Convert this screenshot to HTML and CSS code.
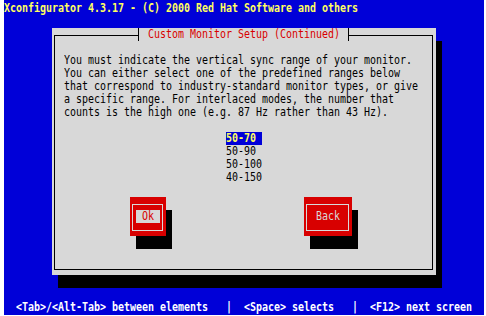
FILE: index.html
```html
<!DOCTYPE html>
<html>
<head>
<meta charset="utf-8">
<link rel="stylesheet" href="styles.css">
</head>
<body>
<div class="screen">
  <div class="titlebar"><span class="tx">Xconfigurator 4.3.17 - (C) 2000 Red Hat Software and others</span></div>
  <div class="dialog">
    <div class="dtitle"><span class="tx">Custom Monitor Setup (Continued)</span></div>
    <div class="frame">
      <div class="body">
        <div class="line"><span class="tx">You must indicate the vertical sync range of your monitor.</span></div>
        <div class="line"><span class="tx">You can either select one of the predefined ranges below</span></div>
        <div class="line"><span class="tx">that correspond to industry-standard monitor types, or give</span></div>
        <div class="line"><span class="tx">a specific range. For interlaced modes, the number that</span></div>
        <div class="line"><span class="tx">counts is the high one (e.g. 87 Hz rather than 43 Hz).</span></div>
      </div>
      <div class="list">
        <div class="item sel"><span class="tx">50-70</span></div>
        <div class="item"><span class="tx">50-90</span></div>
        <div class="item"><span class="tx">50-100</span></div>
        <div class="item"><span class="tx">40-150</span></div>
      </div>
      <div class="buttons">
        <div class="btn ok"><div class="bframe"><div class="blabel"><span class="tx">Ok</span></div></div></div>
        <div class="btn back"><div class="bframe"><div class="blabel"><span class="tx">Back</span></div></div></div>
      </div>
    </div>
  </div>
  <div class="status"><span class="tx">  &lt;Tab&gt;/&lt;Alt-Tab&gt; between elements   |  &lt;Space&gt; selects   |  &lt;F12&gt; next screen</span></div>
</div>
</body>
</html>
```
FILE: styles.css
```css
html, body {
  margin: 0;
  padding: 0;
  background: #ffffff;
}
body {
  width: 486px;
  height: 316px;
  overflow: hidden;
}
.screen {
  margin-left: 4px;
  width: 480px;
  height: 315px;
  box-sizing: border-box;
  padding: 2px 0 1px 0;
  background: #0000d8;
  display: flex;
  flex-direction: column;
  overflow: hidden;
  font-family: "DejaVu Sans Mono", monospace;
  font-size: 12px;
  line-height: 13px;
}
.tx {
  display: inline-block;
  white-space: pre;
  transform: scaleX(0.8306);
  transform-origin: 0 0;
}
.titlebar, .line, .item, .blabel, .status, .dtitle {
  overflow: hidden;
  white-space: nowrap;
}
.titlebar {
  height: 13px;
  color: #ffff60;
  font-weight: bold;
}
.dialog {
  position: relative;
  margin: 13px 0 0 48px;
  width: 384px;
  height: 247px;
  box-sizing: border-box;
  padding: 7px 3px 5px 2px;
  background: #d8d8d8;
  box-shadow: 6px 13px 0 #000;
  flex: none;
}
.frame {
  border: 1px solid #000;
  height: 100%;
  box-sizing: border-box;
  padding: 18px 0 0 9px;
  color: #000;
}
.dtitle {
  position: absolute;
  top: 0;
  left: 86px;
  width: 211px;
  height: 13px;
  box-sizing: border-box;
  border-left: 1px solid #000;
  border-right: 1px solid #000;
  background: #d8d8d8;
  padding-left: 9px;
  color: #d80000;
}
.line {
  height: 13px;
}
.list {
  margin: 13px 0 0 162px;
  width: 36px;
}
.item {
  height: 13px;
}
.item.sel {
  background: #0000d8;
  color: #ffff60;
  font-weight: bold;
}
.buttons {
  display: flex;
  margin: 13px 0 0 66px;
}
.btn {
  height: 39px;
  box-sizing: border-box;
  background: #d80000;
  padding: 7px 3px 5px 2px;
  box-shadow: 6px 13px 0 #000;
}
.ok {
  width: 36px;
}
.back {
  width: 48px;
  margin-left: 138px;
}
.bframe {
  border: 1px solid #d8d8d8;
  height: 100%;
  box-sizing: border-box;
  padding: 5px 0 0 3px;
}
.blabel {
  height: 13px;
  box-sizing: border-box;
  padding-left: 6px;
}
.ok .blabel {
  width: 24px;
  background: #d8d8d8;
  color: #d80000;
}
.back .blabel {
  color: #d8d8d8;
}
.status {
  margin-top: auto;
  height: 13px;
  color: #ffffff;
  font-weight: bold;
}
```
